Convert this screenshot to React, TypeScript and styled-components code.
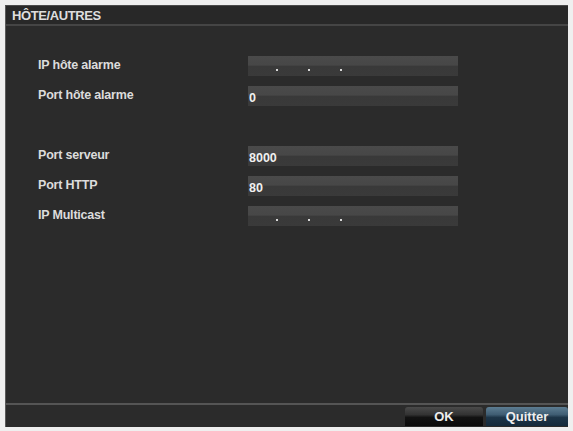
import React from "react";
import styled, { createGlobalStyle } from "styled-components";

const Global = createGlobalStyle`
  html, body { margin: 0; padding: 0; background: #efefef; }
  body { font-family: "Liberation Sans", Arial, sans-serif; }
`;

const Page = styled.div`
  width: 573px;
  height: 431px;
  padding: 5px 5px 4px 5px;
  box-sizing: border-box;
`;

const Panel = styled.div`
  width: 563px;
  height: 422px;
  box-sizing: border-box;
  background: #2b2b2b;
  border-left: 1px solid #5a5a5a;
  border-top: 1px solid #4a4a4a;
  display: flex;
  flex-direction: column;
`;

const TitleBar = styled.div`
  height: 18px;
  border-bottom: 2px solid #454545;
  display: flex;
  align-items: center;
  padding-left: 6px;
  color: #dedede;
  font-weight: bold;
  font-size: 13px;
  letter-spacing: -0.4px;
  background: #282828;
`;

const Content = styled.div`
  flex: 1;
  padding: 30px 0 0 32px;
  display: flex;
  flex-direction: column;
`;

const Row = styled.div`
  height: 30px;
  display: flex;
  align-items: flex-start;
`;

const Label = styled.div`
  width: 210px;
  height: 20px;
  line-height: 18px;
  color: #dcdcdc;
  font-weight: bold;
  font-size: 12.5px;
  letter-spacing: -0.2px;
`;

const Field = styled.div`
  width: 210px;
  height: 20px;
  background: linear-gradient(#4a4a4a 0%, #474747 45%, #393939 52%, #3a3a3a 100%);
  display: flex;
  align-items: center;
  box-sizing: border-box;
  padding: 3px 0 0 1px;
  color: #f0f0f0;
  font-weight: bold;
  font-size: 12.5px;
`;

const IpField = styled(Field)`
  align-items: flex-end;
  padding: 0 0 5px 28px;
  gap: 30px;
`;

const Dot = styled.span`
  width: 2px;
  height: 2px;
  background: #d8d8d8;
  display: block;
`;

const Spacer = styled.div`
  height: 30px;
`;

const Footer = styled.div`
  border-top: 2px solid #555;
  height: 20px;
  padding: 2px 0 0 0;
  display: flex;
  justify-content: flex-end;
  gap: 3px;
`;

const Button = styled.div<{ $primary?: boolean }>`
  width: ${(p) => (p.$primary ? "82px" : "78px")};
  height: 19px;
  border-radius: 3px 3px 0 0;
  display: flex;
  align-items: center;
  justify-content: center;
  color: #eeeeee;
  font-weight: bold;
  font-size: 13px;
  background: ${(p) =>
    p.$primary
      ? "linear-gradient(#5d7d92 0%, #3f5d73 40%, #1d3548 55%, #142a3b 100%)"
      : "linear-gradient(#4a4a4a 0%, #333 40%, #121212 55%, #0b0b0b 100%)"};
`;

const Ip = () => (
  <IpField>
    <Dot />
    <Dot />
    <Dot />
  </IpField>
);

export default function App() {
  return (
    <>
      <Global />
      <Page>
        <Panel>
          <TitleBar>HÔTE/AUTRES</TitleBar>
          <Content>
            <Row>
              <Label>IP hôte alarme</Label>
              <Ip />
            </Row>
            <Row>
              <Label>Port hôte alarme</Label>
              <Field>0</Field>
            </Row>
            <Spacer />
            <Row>
              <Label>Port serveur</Label>
              <Field>8000</Field>
            </Row>
            <Row>
              <Label>Port HTTP</Label>
              <Field>80</Field>
            </Row>
            <Row>
              <Label>IP Multicast</Label>
              <Ip />
            </Row>
          </Content>
          <Footer>
            <Button>OK</Button>
            <Button $primary>Quitter</Button>
          </Footer>
        </Panel>
      </Page>
    </>
  );
}
